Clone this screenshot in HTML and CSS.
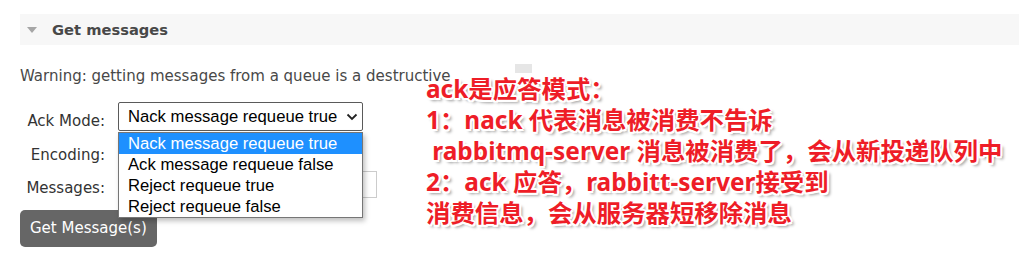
FILE: index.html
```html
<!DOCTYPE html>
<html lang="en">
<head>
<meta charset="utf-8">
<title>Get messages</title>
<link rel="stylesheet" href="styles.css">
</head>
<body>
<div class="page">
  <section class="section">
    <div class="section-head">
      <span class="tri"></span>
      <h2 class="title">Get messages</h2>
    </div>
    <div class="section-body">
      <p class="warning">Warning: getting messages from a queue is a destructive</p>
      <div class="form">
        <div class="row row-ack">
          <label class="label">Ack Mode:</label>
          <div class="select-wrap">
            <div class="select select-ack">
              <span class="select-text">Nack message requeue true</span>
              <svg class="chev" width="12" height="8" viewBox="0 0 12 8"><path d="M1.5 1.5 L6 6 L10.5 1.5" fill="none" stroke="#222" stroke-width="1.8"/></svg>
            </div>
            <ul class="dropdown">
              <li class="opt opt-active">Nack message requeue true</li>
              <li class="opt">Ack message requeue false</li>
              <li class="opt">Reject requeue true</li>
              <li class="opt">Reject requeue false</li>
            </ul>
          </div>
        </div>
        <div class="row row-enc">
          <label class="label">Encoding:</label>
          <div class="select select-enc"><span class="select-text">Auto string / base64</span></div>
        </div>
        <div class="row row-msg">
          <label class="label">Messages:</label>
          <div class="input">1</div>
        </div>
      </div>
      <button class="btn">Get Message(s)</button>
    </div>
  </section>
  <div class="patch"></div>
  <div class="note">
    <div class="note-line">ack是应答模式：</div>
    <div class="note-line">1：nack 代表消息被消费不告诉</div>
    <div class="note-line">&nbsp;rabbitmq-server 消息被消费了，会从新投递队列中</div>
    <div class="note-line">2：ack 应答，rabbitt-server接受到</div>
    <div class="note-line">消费信息，会从服务器短移除消息</div>
  </div>
</div>
</body>
</html>
```

FILE: styles.css
```css
html, body {
  margin: 0;
  padding: 0;
  background: #fff;
}
body {
  font-family: "DejaVu Sans", Verdana, sans-serif;
  font-size: 15px;
  color: #444;
}
.page {
  position: relative;
  width: 1019px;
  height: 277px;
  overflow: hidden;
}
.section {
  margin: 14px 0 0 20px;
}
.section-head {
  height: 31px;
  background: #f7f7f7;
  display: flex;
  align-items: center;
  padding-left: 7px;
}
.tri {
  width: 0;
  height: 0;
  border-left: 5px solid transparent;
  border-right: 5px solid transparent;
  border-top: 6px solid #a6a6a6;
  margin-right: 15px;
  margin-top: 1px;
}
.title {
  margin: 0;
  font-size: 14.7px;
  font-weight: bold;
  color: #484848;
  line-height: 18px;
}
.warning {
  margin: 22px 0 0 0;
  line-height: 18px;
  color: #484848;
}
.form {
  margin-top: 17px;
  display: flex;
  flex-direction: column;
}
.row {
  display: flex;
  align-items: flex-start;
}
.label {
  width: 85px;
  margin-right: 13px;
  text-align: right;
  line-height: 18px;
  color: #333;
}
.row-ack .label { padding-top: 10px; }
.row-enc { margin-top: 9px; }
.row-enc .label { padding-top: 6px; }
.row-msg { margin-top: 3px; }
.row-msg .label { padding-top: 8px; }
.select-wrap {
  position: relative;
}
.select {
  box-sizing: border-box;
  height: 29px;
  border: 1px solid #5a5a5a;
  border-radius: 2px;
  background: #fff;
  display: flex;
  align-items: center;
  padding: 0 4px 0 9px;
  font-family: "Liberation Sans", Arial, sans-serif;
  font-size: 16.67px;
  color: #000;
}
.select-ack {
  width: 245px;
  justify-content: space-between;
}
.select-enc {
  width: 200px;
  height: 28px;
}
.chev {
  margin-top: 1px;
}
.dropdown {
  position: absolute;
  left: 0;
  top: 30px;
  width: 245px;
  box-sizing: border-box;
  margin: 0;
  padding: 0;
  list-style: none;
  background: #fff;
  border: 1px solid #767676;
  box-shadow: 2px 3px 5px rgba(0, 0, 0, 0.25);
  z-index: 5;
}
.opt {
  height: 21px;
  line-height: 21px;
  padding-left: 9px;
  font-family: "Liberation Sans", Arial, sans-serif;
  font-size: 16.67px;
  color: #000;
  white-space: nowrap;
}
.opt-active {
  background: #1e90ff;
  color: #fff;
}
.input {
  box-sizing: border-box;
  width: 259px;
  height: 27px;
  border: 1px solid #ccc;
  background: #fff;
  padding-left: 6px;
  line-height: 25px;
  font-family: "Liberation Sans", Arial, sans-serif;
  font-size: 16px;
  color: #000;
}
.btn {
  display: block;
  margin-top: 12px;
  height: 37px;
  padding: 0 10px;
  border: none;
  border-radius: 5px;
  background: #666;
  color: #fff;
  font-family: "DejaVu Sans", Verdana, sans-serif;
  font-size: 15px;
  line-height: 37px;
}
.patch {
  position: absolute;
  left: 515px;
  top: 64px;
  width: 17px;
  height: 9px;
  background: #e6e6e6;
}
.note {
  position: absolute;
  left: 426px;
  top: 73px;
  font-family: "Noto Sans", "Noto Sans CJK SC", sans-serif;
  font-weight: 700;
  font-size: 24.4px;
  line-height: 31px;
  color: #ee1d27;
  white-space: nowrap;
  z-index: 10;
  text-shadow:
    -2px 0 0 #fff, 2px 0 0 #fff, 0 -2px 0 #fff, 0 2px 0 #fff,
    -1.5px -1.5px 0 #fff, 1.5px -1.5px 0 #fff, -1.5px 1.5px 0 #fff, 1.5px 1.5px 0 #fff,
    3px 3px 3px rgba(0, 0, 0, 0.4);
}
.note-line {
  height: 31px;
}
```
